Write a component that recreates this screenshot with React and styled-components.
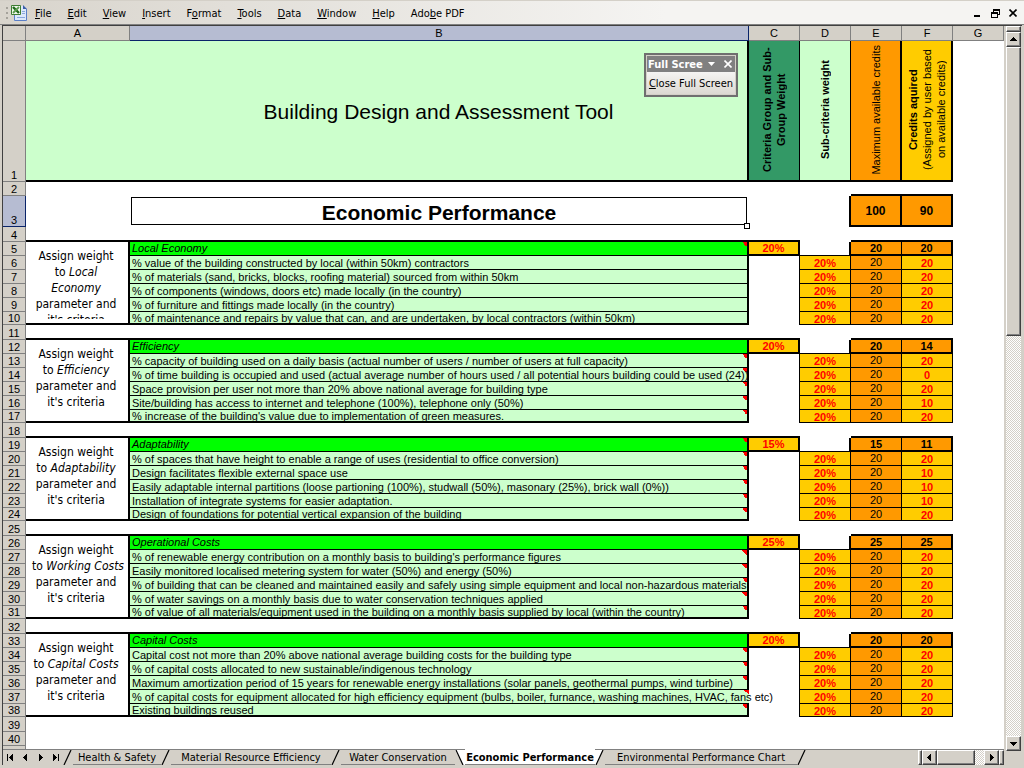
import React from 'react';
import styled, { createGlobalStyle, css } from 'styled-components';

const UI_FONT = '"DejaVu Sans Condensed", "DejaVu Sans", sans-serif';
const SHEET_FONT = '"Liberation Sans", Arial, sans-serif';

const chrome = '#d4d0c8';
const selected = '#b6bcd2';
const mint = '#ccffcc';
const lime = '#00ff00';
const orange = '#ff9900';
const gold = '#ffcc00';

const GlobalStyle = createGlobalStyle`
  * { box-sizing: border-box; }
  body {
    margin: 0;
    background: ${chrome};
    color: #000;
    font: 11px/13px ${UI_FONT};
  }
  button { font: inherit; color: inherit; }
`;

const Window = styled.div`
  display: flex;
  flex-direction: column;
  height: 100vh;
  overflow: hidden;
`;

const MenuBar = styled.header`
  display: flex;
  flex: none;
  align-items: center;
  height: 25px;
  padding: 1px 4px 0 5px;
  border-top: 1px solid ${chrome};
  border-bottom: 1px solid #808080;
  background: linear-gradient(to right, #d8d4cc, #f5f4f2 65%);
`;

const Grip = styled.svg`
  width: 4px;
  height: 12px;
  margin-right: 2px;
`;

const AppIcon = styled.svg`
  width: 16px;
  height: 16px;
`;

const MenuItem = styled.button`
  padding: 2px 8px;
  border: 0;
  background: none;
`;

const WindowButtons = styled.div`
  display: flex;
  gap: 4px;
  margin-left: auto;
`;

const IconButton = styled.button`
  display: flex;
  align-items: center;
  justify-content: center;
  width: 14px;
  height: 14px;
  padding: 0;
  border: 0;
  background: none;
`;

const Workspace = styled.div`
  display: flex;
  flex: 1;
  min-height: 0;
  margin: 0 2px 3px 2px;
  border-top: 1px solid #404040;
  border-left: 1px solid #404040;
`;

const Book = styled.div`
  display: flex;
  flex: 1;
  flex-direction: column;
  min-width: 0;
`;

const SheetArea = styled.main`
  position: relative;
  flex: 1;
  min-height: 0;
  overflow: hidden;
  background: #fff;
`;

const Grid = styled.table`
  width: 100%;
  table-layout: fixed;
  border-collapse: separate;
  border-spacing: 0;
  font: 11px/11px ${SHEET_FONT};
`;

const Col = styled.col`
  width: ${({ w }) => (w ? `${w}px` : 'auto')};
`;

const Row = styled.tr`
  height: ${({ h }) => h}px;
`;

const heading = css`
  padding: 0;
  background: ${({ on }) => (on ? selected : chrome)};
  font-weight: normal;
  text-align: center;
`;

const ColHead = styled.th`
  ${heading};
  height: 15px;
  border-right: 1px solid ${({ on }) => (on ? '#0a246a' : '#808080')};
  border-bottom: 1px solid ${({ on }) => (on ? '#0a246a' : '#808080')};
`;

const RowHead = styled.th`
  ${heading};
  border-right: 1px solid ${({ on }) => (on ? '#0a246a' : '#808080')};
  border-bottom: 1px solid ${({ on }) => (on ? '#0a246a' : '#808080')};
  line-height: 12px;
  vertical-align: bottom;
`;

const Cell = styled.td`
  padding: 0;
  background: ${({ fill = 'transparent' }) => fill};
  border: 0 solid #000;
  border-right-width: ${({ r = 0 }) => r}px;
  border-bottom-width: ${({ b = 0 }) => b}px;
  text-align: center;
  vertical-align: middle;
  white-space: nowrap;
`;

const low = css`
  padding-top: 2px;
  line-height: 9px;
`;

const Score = styled(Cell)`
  color: ${({ red }) => (red ? '#ff0000' : '#000')};
  font-weight: ${({ plain }) => (plain ? 'normal' : 'bold')};
  ${({ sunk }) => sunk && low};
`;

const Total = styled(Score)`
  font-size: 12px;
`;

const Criterion = styled(Cell)`
  ${low};
  padding-left: 2px;
  text-align: left;
  background:
    ${({ note }) => note && 'linear-gradient(to bottom left, #ff0000 50%, transparent 50%) top right / 5px 5px no-repeat,'}
    ${({ fill }) => fill};
`;

const GroupName = styled(Criterion)`
  padding-top: 0;
  font-style: italic;
  line-height: 11px;
`;

const Title = styled(Cell)`
  padding-top: 2px;
  font-size: 21px;
  line-height: 24px;
`;

const Sideways = styled.div`
  display: inline-block;
  max-height: 137px;
  writing-mode: vertical-rl;
  transform: rotate(180deg);
  line-height: 14px;
  font-weight: ${({ bold }) => (bold ? 'bold' : 'normal')};
  white-space: ${({ wrap }) => (wrap ? 'normal' : 'nowrap')};
`;

const ActiveCell = styled.div`
  position: relative;
  height: 28px;
  margin: 1px 2px 2px 1px;
  border: 1px solid #000;
  font-size: 21px;
  font-weight: bold;
  line-height: 30px;
`;

const FillHandle = styled.span`
  position: absolute;
  right: -4px;
  bottom: -5px;
  width: 6px;
  height: 6px;
  border: 1px solid #000;
  background: #fff;
`;

const HintCell = styled(Cell)`
  vertical-align: top;
`;

const Hint = styled.div`
  height: 77px;
  overflow: hidden;
  padding: 6px 8px 0 6px;
  font: 12px/16px ${UI_FONT};
  white-space: normal;
`;

const HintLine = styled.div`
  white-space: nowrap;
`;

const Floating = styled.section`
  position: absolute;
  top: 27px;
  right: 266px;
  width: 94px;
  border: 2px solid #6f6f6f;
  padding: 1px;
  background: ${chrome};
`;

const FloatingTitle = styled.div`
  display: flex;
  align-items: center;
  justify-content: space-between;
  height: 16px;
  padding-left: 1px;
  background: #808080;
  color: #fff;
  font-weight: bold;
  white-space: nowrap;
`;

const FloatingAction = styled.button`
  width: 100%;
  height: 22px;
  padding: 0;
  border: 0;
  background: linear-gradient(#f5f4f2, #dcd9d2);
  white-space: nowrap;
`;

const dither = css`
  background: repeating-conic-gradient(${chrome} 0 25%, #fff 0 50%) 0 0 / 2px 2px;
`;

const raised = css`
  border: 1px solid;
  border-color: #fff #404040 #404040 #fff;
  background: ${chrome};
  box-shadow: inset -1px -1px #808080;
`;

const VerticalBar = styled.div`
  display: flex;
  flex: none;
  flex-direction: column;
  width: 18px;
  padding: 0 1px 0 2px;
  background: ${chrome};
`;

const SplitHandle = styled.div`
  ${raised};
  flex: none;
  width: ${({ w }) => (w ? `${w}px` : 'auto')};
  height: ${({ h }) => h}px;
`;

const ScrollButton = styled.button`
  ${raised};
  display: flex;
  flex: none;
  align-items: center;
  justify-content: center;
  width: 15px;
  height: 15px;
  padding: 0;
`;

const VTrack = styled.div`
  ${dither};
  flex: 1;
`;

const VThumb = styled.div`
  ${raised};
  height: 42%;
`;

const Corner = styled.div`
  height: 14px;
`;

const TabBar = styled.footer`
  display: flex;
  flex: none;
  height: 16px;
  background: ${chrome};
`;

const TabNav = styled.nav`
  display: flex;
  align-items: center;
  width: 60px;
  justify-content: space-between;
  border-top: 1px solid #808080;
`;

const Tabs = styled.div`
  display: flex;
  flex: 1;
  min-width: 0;
  overflow: hidden;
  background: linear-gradient(#808080, #808080) top / 100% 1px no-repeat;
`;

const Tab = styled.button`
  flex: none;
  width: ${({ w }) => w}px;
  height: 16px;
  padding: 1px 0 0;
  border: 0;
  border-top: 1px solid ${({ on }) => (on ? '#fff' : '#808080')};
  border-bottom: 1px solid #808080;
  background: ${({ on }) => (on ? '#fff' : chrome)};
  font-weight: ${({ on }) => (on ? 'bold' : 'normal')};
  line-height: 12px;
  white-space: nowrap;
`;

const Slope = styled.svg`
  flex: none;
  width: 10px;
  height: 15px;
  margin-top: 1px;
`;

const HorizontalBar = styled.div`
  display: flex;
  flex: none;
  width: 86px;
  border-top: 1px solid #808080;
`;

const HThumb = styled.div`
  ${raised};
  width: 38px;
`;

const HTrack = styled.div`
  ${dither};
  flex: 1;
`;

const menus = ['File', 'Edit', 'View', 'Insert', 'Format', 'Tools', 'Data', 'Window', 'Help', 'Adobe PDF'];
const accessKeys = { Format: 1, 'Adobe PDF': 3 };

const groups = [
  {
    name: 'Local Economy', hint: ['Local', 'Economy'], weight: '20%', max: 20, got: 20, noteOnName: true, notes: 0,
    items: [
      ['% value of the building constructed by local (within 50km) contractors', 20],
      ['% of materials (sand, bricks, blocks, roofing material) sourced from within 50km', 20],
      ['% of components (windows, doors etc) made locally (in the country)', 20],
      ['% of furniture and fittings made locally (in the country)', 20],
      ['% of maintenance and repairs by value that can, and are undertaken, by local contractors (within 50km)', 20],
    ],
  },
  {
    name: 'Efficiency', hint: ['Efficiency'], weight: '20%', max: 20, got: 14, notes: 5,
    items: [
      ['% capacity of building used on a daily basis (actual number of users / number of users at full capacity)', 20],
      ['% of time building is occupied and used (actual average number of hours used / all potential hours building could be used (24))', 0],
      ['Space provision per user not more than 20% above national average for building type', 20],
      ['Site/building has access to internet and telephone (100%), telephone only (50%)', 10],
      ["% increase of the building's value due to implementation of green measures.", 20],
    ],
  },
  {
    name: 'Adaptability', hint: ['Adaptability'], weight: '15%', max: 15, got: 11, noteOnName: true, notes: 5,
    items: [
      ['% of spaces that have height to enable a range of uses (residential to office conversion)', 20],
      ['Design facilitates flexible external space use', 10],
      ['Easily adaptable internal partitions (loose partioning (100%), studwall (50%), masonary (25%), brick wall (0%))', 10],
      ['Installation of integrate systems for easier adaptation.', 10],
      ['Design of foundations for potential vertical expansion of the building', 20],
    ],
  },
  {
    name: 'Operational Costs', hint: ['Working Costs'], weight: '25%', max: 25, got: 25, notes: 5,
    items: [
      ["% of renewable energy contribution on a monthly basis to building's performance figures", 20],
      ['Easily monitored localised metering system for water (50%) and energy (50%)', 20],
      ['% of building that can be cleaned and maintained easily and safely using simple equipment and local non-hazardous materials', 20],
      ['% of water savings on a monthly basis due to water conservation techniques applied', 20],
      ['% of value of all materials/equipment used in the building on a monthly basis supplied by local (within the country)', 20],
    ],
  },
  {
    name: 'Capital Costs', hint: ['Capital Costs'], weight: '20%', max: 20, got: 20, notes: 5,
    items: [
      ['Capital cost not more than 20% above national average building costs for the building type', 20],
      ['% of capital costs allocated to new sustainable/indigenous technology', 20],
      ['Maximum amortization period of 15 years for renewable energy installations (solar panels, geothermal pumps, wind turbine)', 20],
      ['% of capital costs for equipment allocated for high efficiency equipment (bulbs, boiler, furnance, washing machines, HVAC, fans etc)', 20, true],
      ['Existing buildings reused', 20],
    ],
  },
];

const AccessLabel = ({ text, at = 0 }) => (
  <>{text.slice(0, at)}<u>{text[at]}</u>{text.slice(at + 1)}</>
);

const arrows = {
  up: 'M0 5h7L3.5 1z',
  down: 'M0 2h7L3.5 6z',
  left: 'M5 0v7L1 3.5z',
  right: 'M2 0v7L6 3.5z',
  first: 'M0 0h1v7H0zM6 0v7L2 3.5z',
  last: 'M6 0h1v7H6zM1 0v7L5 3.5z',
};

const Arrow = ({ dir }) => (
  <svg width="7" height="7" viewBox="0 0 7 7" shapeRendering="crispEdges"><path d={arrows[dir]} /></svg>
);

const Cross = ({ color = '#000' }) => (
  <svg width="8" height="8" viewBox="0 0 8 8"><path d="M0.5 0.5l7 7M7.5 0.5l-7 7" stroke={color} strokeWidth="1.6" /></svg>
);

const Divider = ({ left, right, back }) => (
  <Slope viewBox="0 0 10 15">
    <path d={back ? 'M0 0L8 15H0z' : 'M0 0H8L1 15H0z'} fill={left} />
    <path d={back ? 'M0 0H10V15H8z' : 'M8 0H10V15H1z'} fill={right} />
    <path d={back ? 'M1 0L8 15' : 'M8 0L1 15'} stroke="#000" strokeWidth="1.2" />
  </Slope>
);

const Menu = () => (
  <MenuBar>
    <Grip viewBox="0 0 4 12"><path d="M1 0h2v2H1zM1 5h2v2H1zM1 10h2v2H1z" fill="#a5a29b" /></Grip>
    <AppIcon viewBox="0 0 16 16">
      <path d="M3 1h10l3 3v12H3z" fill="#dce8fa" />
      <path d="M3.5 1v14.5h12V4" fill="none" stroke="#5b7fc7" />
      <path d="M12 0l4 4h-4z" fill="#3c5fa8" />
      <path d="M11 6.5h3M11 8.5h3M6 12.5h8" stroke="#8aa8dd" />
      <path d="M0.5 0.5h9v9h-9z" fill="#f1f8ec" stroke="#3f7d32" />
      <path d="M2 2l6 6" stroke="#1f6a18" strokeWidth="2.4" />
      <path d="M8 2l-6 6" stroke="#5c9c4e" strokeWidth="1.8" />
    </AppIcon>
    {menus.map((m) => (
      <MenuItem key={m}><AccessLabel text={m} at={accessKeys[m]} /></MenuItem>
    ))}
    <WindowButtons>
      <IconButton aria-label="Minimize"><svg width="8" height="8"><path d="M1 6h6v2H1z" /></svg></IconButton>
      <IconButton aria-label="Restore">
        <svg width="9" height="9" shapeRendering="crispEdges">
          <path d="M2 0h7v6H7V5h1V2H3v1H2zM0 3h7v6H0zM1 5v3h5V5z" fillRule="evenodd" />
        </svg>
      </IconButton>
      <IconButton aria-label="Close"><Cross /></IconButton>
    </WindowButtons>
  </MenuBar>
);

const blankRow = (n, h, b) => (
  <Row key={n} h={h}>
    <RowHead>{n}</RowHead>
    <Cell b={b} /><Cell b={b} /><Cell b={b} /><Cell /><Cell b={b} /><Cell b={b} /><Cell />
  </Row>
);

const groupRows = (g, first) => [
  <Row key={first} h={14}>
    <RowHead>{first}</RowHead>
    <HintCell rowSpan={6} r={2} b={2}>
      <Hint>
        <HintLine>Assign weight</HintLine>
        <HintLine>to <i>{g.hint[0]}</i></HintLine>
        {g.hint[1] && <HintLine><i>{g.hint[1]}</i></HintLine>}
        <HintLine>parameter and</HintLine>
        <HintLine>it's criteria</HintLine>
      </Hint>
    </HintCell>
    <GroupName fill={lime} r={2} b={1} note={g.noteOnName}>{g.name}</GroupName>
    <Score fill={gold} r={2} b={2} red>{g.weight}</Score>
    <Cell r={2} b={1} />
    <Score fill={orange} r={1} b={2}>{g.max}</Score>
    <Score fill={orange} r={2} b={2}>{g.got}</Score>
    <Cell />
  </Row>,
  ...g.items.map(([text, got, spills], i) => {
    const last = i === g.items.length - 1;
    return (
      <Row key={first + i + 1} h={last ? 13 : 14}>
        <RowHead>{first + i + 1}</RowHead>
        <Criterion fill={mint} r={spills ? 0 : 2} b={last ? 2 : 1} note={i < g.notes}>{text}</Criterion>
        <Cell r={1} />
        <Score fill={gold} r={1} b={1} red sunk>20%</Score>
        <Score fill={orange} r={1} b={1} plain>20</Score>
        <Score fill={gold} r={1} b={1} red sunk>{got}</Score>
        <Cell />
      </Row>
    );
  }),
];

const Sheet = () => (
  <Grid>
    <colgroup>
      <Col w={23} /><Col w={104} /><Col /><Col w={51} /><Col w={51} /><Col w={51} /><Col w={51} /><Col w={51} />
    </colgroup>
    <thead>
      <tr>
        <ColHead />
        {['A', 'B', 'C', 'D', 'E', 'F', 'G'].map((c) => <ColHead key={c} on={c === 'B'}>{c}</ColHead>)}
      </tr>
    </thead>
    <tbody>
      <Row h={141}>
        <RowHead>1</RowHead>
        <Cell fill={mint} b={2} />
        <Title fill={mint} r={2} b={2}>Building Design and Assessment Tool</Title>
        <Cell fill="#339966" r={1} b={2}><Sideways bold wrap>Criteria Group and Sub-Group Weight</Sideways></Cell>
        <Cell fill={mint} r={1} b={2}><Sideways bold>Sub-criteria weight</Sideways></Cell>
        <Cell fill={orange} r={2} b={2}><Sideways>Maximum available credits</Sideways></Cell>
        <Cell fill={gold} r={2} b={2}>
          <Sideways><b>Credits aquired</b><br />(Assigned by user based<br />on available credits)</Sideways>
        </Cell>
        <Cell />
      </Row>
      <Row h={14}>
        <RowHead>2</RowHead>
        <Cell /><Cell /><Cell /><Cell /><Cell b={2} /><Cell b={2} /><Cell />
      </Row>
      <Row h={31}>
        <RowHead on>3</RowHead>
        <Cell />
        <Cell><ActiveCell>Economic Performance<FillHandle /></ActiveCell></Cell>
        <Cell />
        <Cell r={2} />
        <Total fill={orange} r={2} b={2} sunk>100</Total>
        <Total fill={orange} r={2} b={2} sunk>90</Total>
        <Cell />
      </Row>
      {groups.map((g, i) => [blankRow(4 + i * 7, 15, 2), ...groupRows(g, 5 + i * 7)])}
      {blankRow(39, 15)}
      {blankRow(40, 14)}
      {blankRow('', 14)}
    </tbody>
  </Grid>
);

const FullScreenBar = () => (
  <Floating>
    <FloatingTitle>
      Full Scree
      <IconButton aria-label="Toolbar options"><svg width="7" height="4"><path d="M0 0h7L3.5 4z" fill="#fff" /></svg></IconButton>
      <IconButton aria-label="Close toolbar"><Cross color="#fff" /></IconButton>
    </FloatingTitle>
    <FloatingAction><AccessLabel text="Close Full Screen" /></FloatingAction>
  </Floating>
);

const SheetTabs = () => (
  <TabBar>
    <TabNav>
      {['first', 'left', 'right', 'last'].map((d) => <IconButton key={d} aria-label={`${d} sheet`}><Arrow dir={d} /></IconButton>)}
    </TabNav>
    <Tabs>
      <Divider left={chrome} right={chrome} />
      <Tab w={88}>Health &amp; Safety</Tab>
      <Divider left={chrome} right={chrome} />
      <Tab w={160}>Material Resource Efficiency</Tab>
      <Divider left={chrome} right={chrome} />
      <Tab w={114}>Water Conservation</Tab>
      <Divider left={chrome} right="#fff" back />
      <Tab w={130} on>Economic Performance</Tab>
      <Divider left="#fff" right={chrome} />
      <Tab w={192}>Environmental Performance Chart</Tab>
      <Divider left={chrome} right={chrome} />
    </Tabs>
    <HorizontalBar>
      <SplitHandle w={4} h={15} />
      <ScrollButton aria-label="Scroll left"><Arrow dir="left" /></ScrollButton>
      <HThumb />
      <HTrack />
      <ScrollButton aria-label="Scroll right"><Arrow dir="right" /></ScrollButton>
      <SplitHandle w={5} h={15} />
    </HorizontalBar>
  </TabBar>
);

export default function App() {
  return (
    <Window>
      <GlobalStyle />
      <Menu />
      <Workspace>
        <Book>
          <SheetArea>
            <Sheet />
            <FullScreenBar />
          </SheetArea>
          <SheetTabs />
        </Book>
        <VerticalBar>
          <SplitHandle h={6} />
          <ScrollButton aria-label="Scroll up"><Arrow dir="up" /></ScrollButton>
          <VTrack><VThumb /></VTrack>
          <ScrollButton aria-label="Scroll down"><Arrow dir="down" /></ScrollButton>
          <Corner />
        </VerticalBar>
      </Workspace>
    </Window>
  );
}
